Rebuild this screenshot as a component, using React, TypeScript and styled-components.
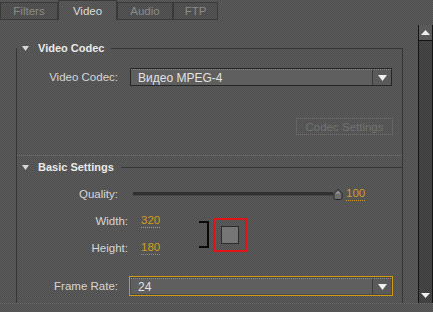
import styled, { createGlobalStyle } from 'styled-components';

const GlobalStyle = createGlobalStyle`
  html, body {
    margin: 0;
    padding: 0;
    background: #555555;
  }
  body {
    font-family: 'Liberation Sans', Arial, sans-serif;
    font-size: 11px;
  }
`;

const dither = `repeating-conic-gradient(#5c5c5c 0% 25%, #4e4e4e 0% 50%) 0 0 / 2px 2px`;

const TABS = [
  { name: 'Filters', width: 58 },
  { name: 'Video', width: 59 },
  { name: 'Audio', width: 56 },
  { name: 'FTP', width: 45 },
];

function Triangle() {
  return (
    <svg width="7" height="5" viewBox="0 0 7 5">
      <path d="M0 0 L7 0 L3.5 5 Z" fill="#d8d8d8" />
    </svg>
  );
}

function SelectBox({ value, focused }: { value: string; focused?: boolean }) {
  return (
    <Select $focused={focused}>
      <SelectValue>{value}</SelectValue>
      <DropButton>
        <svg width="9" height="6" viewBox="0 0 9 6">
          <path d="M0 0 L9 0 L4.5 6 Z" fill="#f0f0f0" />
        </svg>
      </DropButton>
    </Select>
  );
}

function App() {
  return (
    <Root>
      <GlobalStyle />
      <TabBar>
        {TABS.map((t) => (
          <Tab key={t.name} $active={t.name === 'Video'} $width={t.width}>
            {t.name}
          </Tab>
        ))}
      </TabBar>
      <Main>
        <Panel>
          <SectionHeader $first>
            <Triangle />
            <SectionTitle>Video Codec</SectionTitle>
            <Rule />
          </SectionHeader>
          <Row $top={13}>
            <Label $width={101}>Video Codec:</Label>
            <SelectSlot $gap={12} $width={262}>
              <SelectBox value="Видео MPEG-4" />
            </SelectSlot>
          </Row>
          <ButtonRow>
            <DisabledButton>Codec Settings</DisabledButton>
          </ButtonRow>
          <Separator />
          <SectionHeader>
            <Triangle />
            <SectionTitle>Basic Settings</SectionTitle>
            <Rule />
          </SectionHeader>
          <Row $top={11}>
            <Label $width={101}>Quality:</Label>
            <Track />
            <Thumb>
              <svg width="10" height="11" viewBox="0 0 10 11">
                <path
                  d="M5 0.5 L9 4.5 L9 9 Q9 10.5 7.5 10.5 L2.5 10.5 Q1 10.5 1 9 L1 4.5 Z"
                  fill="#6e6e6e"
                  stroke="#262626"
                  strokeWidth="1"
                />
                <path d="M5 2 L7.5 4.5 L2.5 4.5 Z" fill="#9a9a9a" />
              </svg>
            </Thumb>
            <Value $gap={3}>100</Value>
          </Row>
          <SizeBlock>
            <SizeFields>
              <Row>
                <Label $width={111}>Width:</Label>
                <Value $gap={13}>320</Value>
              </Row>
              <Row $top={9}>
                <Label $width={111}>Height:</Label>
                <Value $gap={13}>180</Value>
              </Row>
            </SizeFields>
            <Bracket />
            <Highlight>
              <LinkButton />
            </Highlight>
          </SizeBlock>
          <Row $top={19} $height={20}>
            <Label $width={101}>Frame Rate:</Label>
            <SelectSlot $gap={11} $width={264}>
              <SelectBox value="24" focused />
            </SelectSlot>
          </Row>
        </Panel>
        <ScrollBar>
          <ScrollButton>
            <svg width="9" height="5" viewBox="0 0 9 5">
              <path d="M4.5 0 L9 5 L0 5 Z" fill="#f0f0f0" />
            </svg>
          </ScrollButton>
          <ScrollTrack />
          <ScrollButton $bottom>
            <svg width="9" height="5" viewBox="0 0 9 5">
              <path d="M0 0 L9 0 L4.5 5 Z" fill="#f0f0f0" />
            </svg>
          </ScrollButton>
        </ScrollBar>
      </Main>
      <Footer />
    </Root>
  );
}

const Root = styled.div`
  width: 433px;
  height: 312px;
  overflow: hidden;
  background: ${dither};
  color: #d8d8d8;
  font-family: 'Liberation Sans', Arial, sans-serif;
  font-size: 11px;
`;

const TabBar = styled.div`
  display: flex;
  height: 20px;
`;

const Tab = styled.div<{ $active?: boolean; $width: number }>`
  box-sizing: border-box;
  width: ${(p) => p.$width}px;
  height: ${(p) => (p.$active ? 20 : 18)}px;
  margin-top: ${(p) => (p.$active ? 0 : 2)}px;
  display: flex;
  align-items: center;
  justify-content: center;
  border: 1px solid #3a3a3a;
  border-bottom: ${(p) => (p.$active ? 'none' : '1px solid #3a3a3a')};
  color: ${(p) => (p.$active ? '#dcdcdc' : '#8a8a8a')};
  font-size: 11.5px;
  background: ${(p) =>
    p.$active
      ? dither
      : 'repeating-conic-gradient(#565656 0% 25%, #494949 0% 50%) 0 0 / 2px 2px'};
`;

const Main = styled.div`
  display: flex;
  align-items: flex-start;
  height: 283px;
`;

const Panel = styled.div`
  box-sizing: border-box;
  width: 387px;
  height: 255px;
  margin: 28px 0 0 16px;
  border-left: 1px solid #363636;
  border-right: 1px solid #363636;
  display: flex;
  flex-direction: column;
`;

const SectionHeader = styled.div<{ $first?: boolean }>`
  display: flex;
  align-items: center;
  height: 14px;
  margin-top: ${(p) => (p.$first ? -7 : 4)}px;
  padding-left: 5px;
`;

const SectionTitle = styled.span`
  margin-left: 9px;
  font-weight: bold;
  color: #eaeaea;
  font-size: 11px;
  white-space: nowrap;
`;

const Rule = styled.div`
  flex: 1;
  height: 1px;
  margin-left: 7px;
  background: #363636;
`;

const Row = styled.div<{ $top?: number; $height?: number }>`
  display: flex;
  align-items: center;
  height: ${(p) => p.$height ?? 18}px;
  margin-top: ${(p) => p.$top ?? 0}px;
`;

const Label = styled.div<{ $width: number }>`
  width: ${(p) => p.$width}px;
  text-align: right;
  color: #d6d6d6;
  font-size: 11.5px;
  white-space: nowrap;
`;

const SelectSlot = styled.div<{ $gap: number; $width: number }>`
  margin-left: ${(p) => p.$gap}px;
  width: ${(p) => p.$width}px;
  height: 100%;
`;

const Select = styled.div<{ $focused?: boolean }>`
  box-sizing: border-box;
  height: 100%;
  display: flex;
  border: 1px solid ${(p) => (p.$focused ? '#d09a14' : '#262626')};
  padding: ${(p) => (p.$focused ? '1px' : '0')};
  background: #4a4a4a;
`;

const SelectValue = styled.div`
  flex: 1;
  display: flex;
  align-items: center;
  padding-left: 7px;
  background: #5f5f5f;
  border-top: 1px dotted #858585;
  color: #e2e2e2;
  font-size: 12px;
`;

const DropButton = styled.div`
  width: 18px;
  display: flex;
  align-items: center;
  justify-content: center;
  background: #5a5a5a;
  border-left: 1px solid #3c3c3c;
  border-top: 1px dotted #858585;
`;

const ButtonRow = styled.div`
  display: flex;
  justify-content: flex-end;
  padding-right: 9px;
  margin-top: 32px;
`;

const DisabledButton = styled.div`
  box-sizing: border-box;
  width: 97px;
  height: 17px;
  display: flex;
  align-items: center;
  justify-content: center;
  border: 1px dotted #6c6c6c;
  color: #727272;
  font-size: 11.5px;
`;

const Separator = styled.div`
  height: 0;
  margin-top: 20px;
  border-top: 1px dotted #6a6a6a;
`;

const Track = styled.div`
  margin-left: 15px;
  width: 200px;
  height: 3px;
  background: #303030;
  border-bottom: 1px solid #464646;
`;

const Thumb = styled.div`
  width: 10px;
  height: 11px;
  display: flex;
`;

const Value = styled.span<{ $gap: number }>`
  margin-left: ${(p) => p.$gap}px;
  color: #d49c1c;
  font-size: 11.5px;
  line-height: 13px;
  border-bottom: 1px dotted #c8921a;
`;

const SizeBlock = styled.div`
  display: flex;
  align-items: center;
  margin-top: 9px;
`;

const SizeFields = styled.div`
  width: 182px;
  display: flex;
  flex-direction: column;
`;

const Bracket = styled.div`
  width: 8px;
  height: 23px;
  border: 2px solid #0a0a0a;
  border-left: none;
`;

const Highlight = styled.div`
  box-sizing: border-box;
  width: 34px;
  height: 34px;
  margin-left: 4px;
  border: 2px solid #e01414;
  display: flex;
  align-items: center;
  justify-content: center;
`;

const LinkButton = styled.div`
  box-sizing: border-box;
  width: 18px;
  height: 18px;
  border: 1px solid #2c2c2c;
  background: #767676;
`;

const ScrollBar = styled.div`
  box-sizing: border-box;
  width: 15px;
  height: 278px;
  margin: 5px 0 0 15px;
  border-left: 1px solid #141414;
  border-right: 1px solid #141414;
  display: flex;
  flex-direction: column;
  background: repeating-conic-gradient(#4a4a4a 0% 25%, #3a3a3a 0% 50%) 0 0 / 2px 2px;
`;

const ScrollButton = styled.div<{ $bottom?: boolean }>`
  height: 15px;
  display: flex;
  align-items: center;
  justify-content: center;
  background: ${(p) => (p.$bottom ? 'transparent' : '#5a5a5a')};
  border-bottom: ${(p) => (p.$bottom ? 'none' : '1px solid #141414')};
`;

const ScrollTrack = styled.div`
  flex: 1;
`;

const Footer = styled.div`
  height: 0;
  border-top: 1px dotted #6c6c6c;
`;

export default App;
